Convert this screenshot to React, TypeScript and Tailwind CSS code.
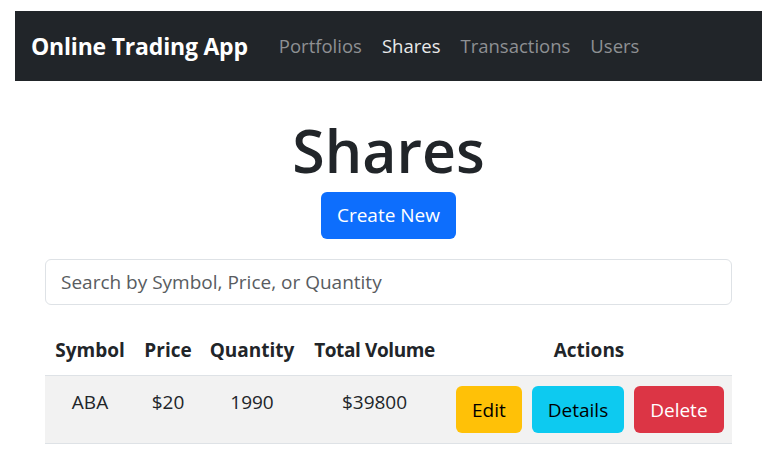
import React from "react";

const font = { fontFamily: '"Open Sans", "Noto Sans", sans-serif' };

interface Share {
  symbol: string;
  price: number;
  quantity: number;
}

const shares: Share[] = [{ symbol: "ABA", price: 20, quantity: 1990 }];

function Navbar() {
  return (
    <nav className="flex items-center h-[70px] bg-[#212529] pl-[16px]">
      <span className="text-white font-bold text-[23px] tracking-[-0.2px] mr-[21px]">
        Online Trading App
      </span>
      <div className="flex items-center text-[18.5px]">
        <a className="px-[10px] text-[#8e9093]">Portfolios</a>
        <a className="px-[10px] text-[#e9eaea]">Shares</a>
        <a className="px-[10px] text-[#8e9093]">Transactions</a>
        <a className="px-[10px] text-[#8e9093]">Users</a>
      </div>
    </nav>
  );
}

function SharesTable() {
  const cols = "grid grid-cols-[90px_66px_102px_143px_1fr]";
  const cell = "flex justify-center whitespace-nowrap p-[10px]";
  return (
    <div className="mt-[20px] text-[#212529]">
      <div className={`${cols} font-bold text-[19px] leading-[30px] border-b border-[#dee2e6]`}>
        <div className={cell}>Symbol</div>
        <div className={cell}>Price</div>
        <div className={cell}>Quantity</div>
        <div className={`${cell} tracking-[-0.4px]`}>Total Volume</div>
        <div className={cell}>Actions</div>
      </div>
      {shares.map((s) => (
        <div
          key={s.symbol}
          className={`${cols} text-[19px] leading-[30px] bg-[#f2f2f2] border-b border-[#dee2e6]`}
        >
          <div className={`${cell} pt-[11px]`}>{s.symbol}</div>
          <div className={`${cell} pt-[11px]`}>${s.price}</div>
          <div className={`${cell} pt-[11px]`}>{s.quantity}</div>
          <div className={`${cell} pt-[11px]`}>${s.price * s.quantity}</div>
          <div className={`${cell} gap-[10px]`}>
            <button className="h-[47px] px-[16px] rounded-[6px] bg-[#ffc107] text-black">Edit</button>
            <button className="h-[47px] px-[16px] rounded-[6px] bg-[#0dcaf0] text-black">Details</button>
            <button className="h-[47px] px-[16px] rounded-[6px] bg-[#dc3545] text-white">Delete</button>
          </div>
        </div>
      ))}
    </div>
  );
}

export default function App() {
  return (
    <div className="min-h-[455px] bg-white px-[15px] pt-[11px]" style={font}>
      <Navbar />
      <main className="px-[30px]">
        <h1 className="mt-[33px] text-center text-[59px] leading-[72px] font-semibold text-[#212529]">
          Shares
        </h1>
        <div className="flex justify-center mt-[6px]">
          <button className="h-[47px] px-[16px] rounded-[6px] bg-[#0d6efd] text-white text-[19px]">
            Create New
          </button>
        </div>
        <input
          className="mt-[20px] w-full h-[46px] px-[15px] rounded-[6px] border border-[#dee2e6] text-[19px] placeholder:text-[#595c5f] outline-none"
          placeholder="Search by Symbol, Price, or Quantity"
        />
        <SharesTable />
      </main>
    </div>
  );
}
